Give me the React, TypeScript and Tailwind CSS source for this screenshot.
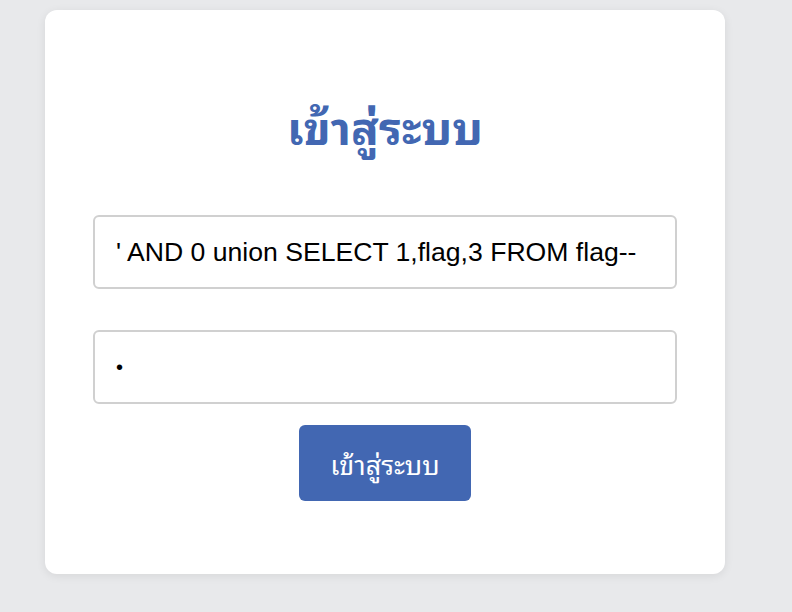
import React from "react";

export default function App() {
  return (
    <div className="min-h-[612px] w-full bg-[#e8e9eb] pt-[10px] pl-[45px]">
      <div className="w-[680px] h-[564px] bg-white rounded-[12px] shadow-[0_2px_10px_rgba(0,0,0,0.08)] px-[48px] pt-[90px] flex flex-col items-center">
        <h1 className="h-[48px] overflow-visible text-[46px] leading-[48px] font-bold text-[#4267b2] text-center font-['Noto_Sans_Thai_Looped','Noto_Sans_Thai','Noto_Sans',sans-serif]">
          เข้าสู่ระบบ
        </h1>
        <input
          readOnly
          value="' AND 0 union SELECT 1,flag,3 FROM flag--"
          className="mt-[67px] w-[584px] h-[74px] border-2 border-[#d0d0d0] rounded-[6px] px-[21px] text-[26.6px] text-black outline-none font-['Liberation_Sans',Arial,sans-serif]"
        />
        <input
          readOnly
          type="password"
          value="a"
          className="mt-[41px] w-[584px] h-[74px] border-2 border-[#d0d0d0] rounded-[6px] px-[21px] text-[20px] text-black outline-none font-['Liberation_Sans',Arial,sans-serif]"
        />
        <button className="mt-[21px] w-[172px] h-[76px] bg-[#4267b2] rounded-[6px] text-white text-[27px] leading-[30px] font-['Noto_Sans_Thai_Looped','Noto_Sans_Thai','Noto_Sans',sans-serif]">
          เข้าสู่ระบบ
        </button>
      </div>
    </div>
  );
}
